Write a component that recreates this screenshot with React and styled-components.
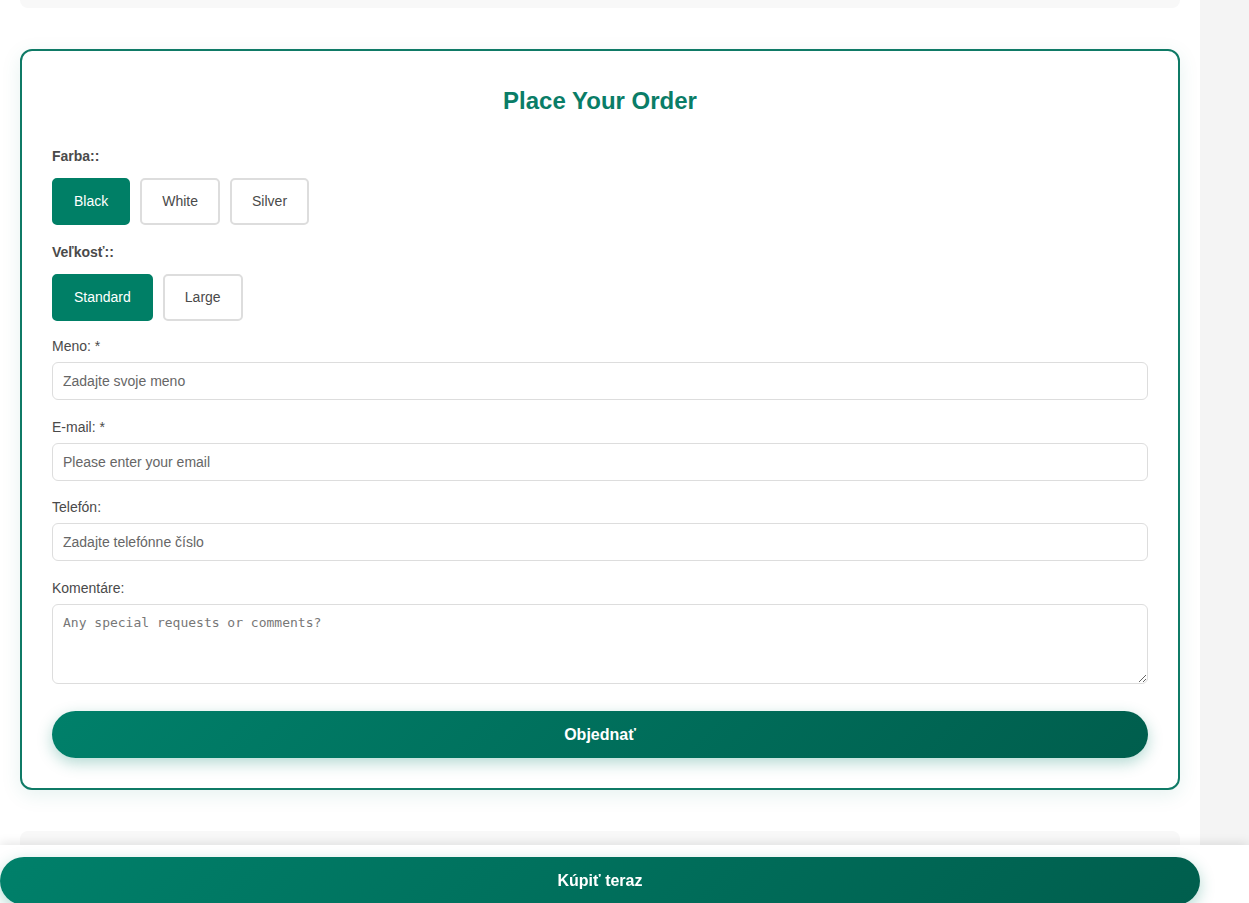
import { useState } from "react";
import styled, { createGlobalStyle } from "styled-components";

const GlobalStyle = createGlobalStyle`
  html, body {
    margin: 0;
    padding: 0;
    overflow: hidden;
    background-color: #f4f4f4;
    font-family: "Liberation Sans", Arial, sans-serif;
  }
  * {
    box-sizing: border-box;
  }
`;

const colorOptions = ["Black", "White", "Silver"];
const sizeOptions = ["Standard", "Large"];

function App() {
  const [color, setColor] = useState("Black");
  const [size, setSize] = useState("Standard");

  return (
    <>
      <GlobalStyle />
      <Main>
        <PrevSection />
        <OrderCard>
          <Title>Place Your Order</Title>

          <OptionLabel>Farba::</OptionLabel>
          <OptionGroup $space={19}>
            {colorOptions.map((c) => (
              <OptionBtn key={c} $active={color === c} onClick={() => setColor(c)}>
                {c}
              </OptionBtn>
            ))}
          </OptionGroup>

          <OptionLabel>Veľkosť::</OptionLabel>
          <OptionGroup $space={17}>
            {sizeOptions.map((s) => (
              <OptionBtn key={s} $active={size === s} onClick={() => setSize(s)}>
                {s}
              </OptionBtn>
            ))}
          </OptionGroup>

          <Field>
            <FieldLabel>Meno: *</FieldLabel>
            <Input type="text" placeholder="Zadajte svoje meno" />
          </Field>
          <Field>
            <FieldLabel>E-mail: *</FieldLabel>
            <Input type="email" placeholder="Please enter your email" />
          </Field>
          <Field>
            <FieldLabel>Telefón:</FieldLabel>
            <Input type="tel" placeholder="Zadajte telefónne číslo" />
          </Field>
          <Field>
            <FieldLabel>Komentáre:</FieldLabel>
            <TextArea placeholder="Any special requests or comments?" />
          </Field>

          <SubmitBtn>Objednať</SubmitBtn>
        </OrderCard>
        <NextSection />
      </Main>

      <StickyBar>
        <BuyBtn>Kúpiť teraz</BuyBtn>
      </StickyBar>
    </>
  );
}

const Main = styled.div`
  width: 1200px;
  min-height: 100vh;
  padding: 0 20px;
  background-color: white;
`;

const PrevSection = styled.div`
  height: 8px;
  background-color: #f8f8f8;
  border-radius: 0 0 8px 8px;
`;

const NextSection = styled.div`
  height: 120px;
  margin-top: 41px;
  background-color: #f8f8f8;
  border-radius: 8px 8px 0 0;
`;

const OrderCard = styled.div`
  margin-top: 41px;
  padding: 35px 30px 30px;
  border: 2px solid #0f7a66;
  border-radius: 12px;
  background-color: white;
  box-shadow: 0 5px 20px rgba(0, 128, 106, 0.1);
`;

const Title = styled.h2`
  margin: 0 0 33px;
  font-size: 24px;
  line-height: 29px;
  font-weight: 700;
  color: #0a7d67;
  text-align: center;
`;

const OptionLabel = styled.div`
  font-size: 14px;
  line-height: 16px;
  font-weight: 700;
  color: #4a4a4a;
  margin-bottom: 14px;
`;

const OptionGroup = styled.div`
  display: flex;
  gap: 10px;
  margin-bottom: ${(p) => p.$space}px;
`;

const OptionBtn = styled.button`
  padding: 12px 20px;
  font-family: "Liberation Sans", Arial, sans-serif;
  font-size: 14px;
  line-height: 19px;
  border-radius: 5px;
  border: 2px solid ${(p) => (p.$active ? "#007f66" : "#ddd")};
  background-color: ${(p) => (p.$active ? "#007f66" : "white")};
  color: ${(p) => (p.$active ? "white" : "#4a4a4a")};
  cursor: pointer;
`;

const Field = styled.div`
  margin-bottom: 18.7px;
  display: flex;
  flex-direction: column;
`;

const FieldLabel = styled.label`
  font-size: 14px;
  line-height: 16px;
  color: #4a4a4a;
  margin-bottom: 8px;
`;

const Input = styled.input`
  width: 100%;
  height: 38px;
  padding: 0 10px;
  font-family: "Liberation Sans", Arial, sans-serif;
  font-size: 14px;
  border: 1px solid #ddd;
  border-radius: 6px;
  outline: none;
  &::placeholder {
    color: #666;
  }
`;

const TextArea = styled.textarea`
  width: 100%;
  height: 80px;
  padding: 10px;
  font-family: "DejaVu Sans Mono", "Liberation Mono", monospace;
  font-size: 13px;
  border: 1px solid #ddd;
  border-radius: 6px;
  outline: none;
  resize: vertical;
  &::placeholder {
    color: #777;
  }
`;

const SubmitBtn = styled.button`
  display: block;
  width: 100%;
  height: 47px;
  margin-top: 27px;
  border: none;
  border-radius: 30px;
  background: linear-gradient(135deg, #00806a 0%, #005e4d 100%);
  color: white;
  font-family: "Liberation Sans", Arial, sans-serif;
  font-size: 16px;
  font-weight: 700;
  box-shadow: 0 5px 15px rgba(0, 128, 106, 0.3);
  cursor: pointer;
`;

const StickyBar = styled.div`
  position: fixed;
  left: 0;
  right: 0;
  bottom: 0;
  height: 58px;
  padding-top: 12px;
  overflow: hidden;
  background-color: white;
  box-shadow: 0 -2px 10px rgba(0, 0, 0, 0.1);
`;

const BuyBtn = styled.button`
  display: block;
  width: 1200px;
  height: 48px;
  border: none;
  border-radius: 30px;
  background: linear-gradient(135deg, #00806a 0%, #005e4d 100%);
  color: white;
  font-family: "Liberation Sans", Arial, sans-serif;
  font-size: 16px;
  font-weight: 700;
  box-shadow: 0 5px 15px rgba(0, 128, 106, 0.3);
  cursor: pointer;
`;

export default App;
